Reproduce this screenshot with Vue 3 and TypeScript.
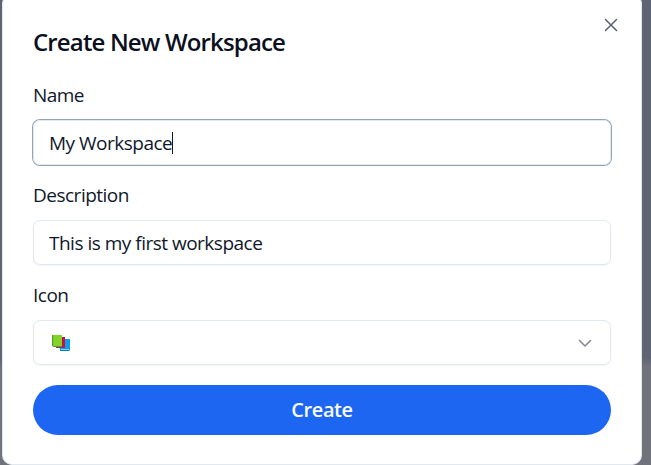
<script setup lang="ts">
import { ref } from 'vue'

const name = ref('My Workspace')
const description = ref('This is my first workspace')
</script>

<template>
  <main class="backdrop">
    <section class="dialog" role="dialog" aria-labelledby="title">
      <header class="header">
        <h1 id="title"><span class="title-text">Create New Workspace</span></h1>
        <button class="close" aria-label="Close">
          <svg width="20" height="20" viewBox="0 0 20 20">
            <path d="M4.5 4.5 15.5 15.5M15.5 4.5 4.5 15.5" />
          </svg>
        </button>
      </header>
      <form class="form" @submit.prevent>
        <div class="field">
          <div class="label"><span class="l-name">Name</span></div>
          <div class="control focused"><span class="v-name">{{ name }}</span><i class="caret"></i></div>
        </div>
        <div class="field">
          <div class="label"><span class="l-desc">Description</span></div>
          <div class="control"><span class="v-desc">{{ description }}</span></div>
        </div>
        <div class="field">
          <div class="label"><span class="l-icon">Icon</span></div>
          <div class="control select">
            <svg class="books" width="20" height="20" viewBox="0 0 20 20">
              <path fill="#0d9fe8" d="M8 5h11v11H9z" />
              <path fill="#bcd9e8" d="M10 15.2h8v.8h-8z" />
              <path fill="#0878b8" d="M9 16h9.5v1H9z" />
              <path fill="#cf0c48" d="M6 3h8v11H6z" />
              <path fill="#8e315c" d="M5 12.5h9V14H5z" />
              <path fill="#84d329" d="M1.5 1h9.5v11H1.5z" />
              <path fill="#579b36" d="M1 1h1.2v11H11v1H2.5L1 11.8z" />
            </svg>
            <svg class="chevron" width="20" height="20" viewBox="0 0 20 20">
              <path d="m4.5 7.5 5.5 5.5 5.5-5.5" />
            </svg>
          </div>
        </div>
        <button class="submit"><span class="submit-text">Create</span></button>
      </form>
    </section>
  </main>
</template>

<style>
body {
  overflow: hidden;
}
</style>

<style scoped>
* {
  box-sizing: border-box;
}
.backdrop {
  width: 651px;
  height: 465px;
  padding-left: 2px;
  overflow: hidden;
  background: linear-gradient(#5d6572 0, #5d6572 358px, #70727c 366px, #70727c);
  font-family: "Open Sans", "Noto Sans", sans-serif;
  color: #0f172a;
}
.dialog {
  width: 640px;
  height: 471px;
  margin-top: -6px;
  padding: 31px 30px 0;
  border: 1px solid #e2e8f0;
  border-top: 0;
  border-radius: 10px;
  background: #fff;
}
.header {
  display: flex;
  justify-content: space-between;
  height: 55px;
}
h1 {
  margin: 0;
  padding-top: 1px;
  font-size: 24px;
  line-height: 32px;
  font-weight: 650;
  color: #0b1020;
  white-space: nowrap;
}
.title-text {
  letter-spacing: -0.85px;
}
.close {
  width: 20px;
  height: 20px;
  margin-right: -10px;
  margin-top: -10px;
  padding: 0;
  border: 0;
  background: none;
}
svg {
  display: block;
  flex: none;
}
.close path {
  stroke: #5b6070;
  stroke-width: 1.5;
  stroke-linecap: round;
}
.form {
  display: flex;
  flex-direction: column;
}
.field {
  height: 100px;
}
.label {
  height: 40px;
  padding-top: 1px;
  font-size: 19px;
  line-height: 28px;
}
.control {
  display: flex;
  align-items: center;
  height: 45px;
  padding: 0 15px;
  border: 1px solid #e2e8f0;
  border-radius: 7px;
  box-shadow: 0 1px 2px #0f172a0d;
  font-size: 19px;
  line-height: 28px;
  white-space: nowrap;
}
.focused {
  border-color: #e2e8f0;
  box-shadow: 0 0 0 1px #94a3b8, 0 1px 2px #0f172a0d;
}
.l-name {
  letter-spacing: -0.6px;
}
.l-desc,
.l-icon,
.v-name,
.v-desc {
  letter-spacing: -0.5px;
}
.caret {
  width: 1px;
  height: 22px;
  background: #0f172a;
}
.select {
  justify-content: space-between;
}
.books {
  margin-top: 2px;
  margin-left: 2px;
}
.chevron path {
  fill: none;
  stroke: #858992;
  stroke-width: 1.6;
  stroke-linecap: round;
  stroke-linejoin: round;
}
.submit {
  height: 50px;
  margin-top: 5px;
  border: 0;
  border-radius: 25px;
  background: #1d66f2;
  color: #f8fafc;
  font: 600 20px/28px "Open Sans", sans-serif;
}
.submit-text {
  letter-spacing: -0.4px;
}
</style>
